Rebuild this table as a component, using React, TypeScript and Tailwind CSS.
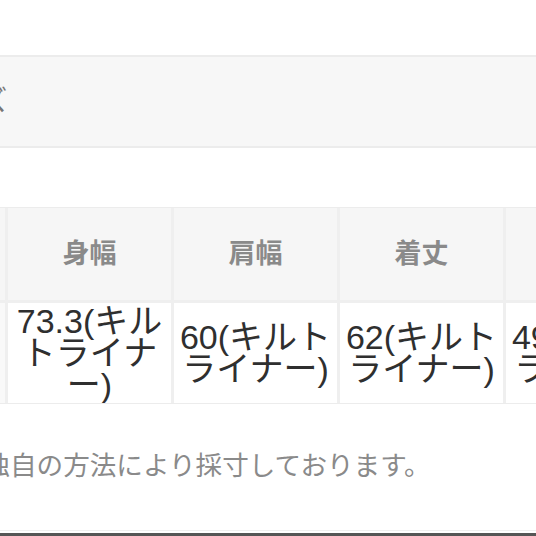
import React from 'react';

const columns = [
  { label: '身幅', value: '73.3(キルトライナー)' },
  { label: '肩幅', value: '60(キルトライナー)' },
  { label: '着丈', value: '62(キルトライナー)' },
  { label: '袖丈', value: '49(キルトライナー)' },
];

function SizeTable() {
  return (
    <div className="border-y border-[#ececec] bg-[#efefef] overflow-hidden">
      <div className="flex gap-[3px] w-[700px]">
        <div className="w-[5px] shrink-0 flex flex-col gap-[3px]">
          <div className="h-[92px] bg-[#f6f6f6]" />
          <div className="h-[100px] bg-[#f9f9f9]" />
        </div>
        {columns.map((col) => (
          <div key={col.label} className="w-[163px] shrink-0 flex flex-col gap-[3px]">
            <div className="h-[92px] bg-[#f6f6f6] flex items-center justify-center text-[27px] font-semibold text-[#8a8a8a]">
              {col.label}
            </div>
            <div className="h-[100px] bg-white flex items-center justify-center px-0.5 text-center text-[34px] leading-[32px] text-[#2f2f2f]">
              {col.value}
            </div>
          </div>
        ))}
      </div>
    </div>
  );
}

export default function App() {
  return (
    <div className="w-[536px] h-[536px] bg-white overflow-hidden flex flex-col font-['Liberation_Sans','Noto_Sans_CJK_JP',sans-serif]">
      <div className="h-[55px] shrink-0" />
      <div className="h-[93px] shrink-0 border-y-2 border-[#ececec] bg-[#f7f7f7] flex items-center overflow-hidden">
        <span className="ml-[-76px] text-[28px] text-[#777] whitespace-nowrap">サイズ</span>
      </div>
      <div className="h-[59px] shrink-0" />
      <SizeTable />
      <div className="flex-1 flex items-center overflow-hidden">
        <p className="ml-[-16.6px] text-[26.6px] text-[#8a8a8a] whitespace-nowrap">
          独自の方法により採寸しております。
        </p>
      </div>
      <div className="h-px bg-[#f0f0f0] mb-[2px]" />
      <div className="h-[3px] bg-[#555]" />
    </div>
  );
}
